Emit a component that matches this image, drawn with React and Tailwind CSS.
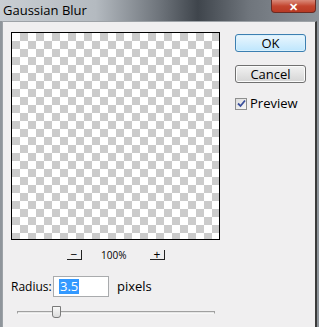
import { useState } from 'react';

function Checker() {
	return (
		<div
			className="w-[209px] h-[208px] border border-black bg-white"
			style={{
				backgroundImage:
					'linear-gradient(45deg, #cbcbcb 25%, transparent 25%, transparent 75%, #cbcbcb 75%), linear-gradient(45deg, #cbcbcb 25%, transparent 25%, transparent 75%, #cbcbcb 75%)',
				backgroundSize: '16px 16px',
				backgroundPosition: '0 0, 8px 8px',
			}}
		/>
	);
}

function WinButton({ label, focused }) {
	return (
		<button
			className={`w-[71px] h-[18px] rounded-[3px] border text-[13px] leading-none text-black bg-gradient-to-b ${
				focused
					? 'border-[#3c7fb1] from-[#eaf6fd] to-[#bee6fd] shadow-[inset_0_0_0_1px_#d9f0fc]'
					: 'border-[#707070] from-[#f2f2f2] to-[#d5d5d5] shadow-[inset_0_0_0_1px_#fbfbfb]'
			}`}
		>
			{label}
		</button>
	);
}

function ZoomBtn({ label }) {
	return (
		<div className="w-[15px] h-[10px] flex items-center justify-center border-r border-b border-[#222] text-[12px] leading-none text-black">
			{label}
		</div>
	);
}

export default function App() {
	const [preview, setPreview] = useState(true);

	return (
		<div
			className="w-[319px] h-[327px] flex flex-col overflow-hidden"
			style={{ fontFamily: '"Open Sans", "Noto Sans", sans-serif' }}
		>
			{/* title bar */}
			<div className="h-[21px] flex items-start justify-between bg-[linear-gradient(90deg,#c9ced3_0%,#b4bac0_30%,#6e747b_50%,#3f454c_62%,#6f757c_78%,#8d939a_100%)]">
				<span className="pl-[3px] pt-[1px] text-[13px] leading-[18px] text-black">Gaussian Blur</span>
				<div className="mr-[3px] w-[45px] h-[13px] rounded-b-[4px] border border-t-0 border-[#6b2a22] bg-gradient-to-b from-[#d98a7a] via-[#c3452f] to-[#b83a24] flex items-center justify-center">
					<span className="text-white text-[11px] font-bold leading-none">✕</span>
				</div>
			</div>

			{/* dialog body */}
			<div className="flex-1 flex bg-[#8f959b]">
				<div className="flex-1 ml-[2px] mr-[2px] bg-[#f0eff0] border-t border-l border-[#9da2a7] border-r-2 border-r-[#3a3a3a] flex flex-col">
					<div className="flex pt-[10px] pl-[8px]">
						<Checker />
						<div className="ml-[15px] pt-[2px] flex flex-col gap-[13px]">
							<WinButton label="OK" focused />
							<WinButton label="Cancel" />
							<label className="flex items-center gap-[3px] text-[13px] leading-none text-black mt-[1px]">
								<span
									onClick={() => setPreview(!preview)}
									className="w-[12px] h-[12px] border border-[#8e8f8f] bg-gradient-to-br from-[#dcdcdc] to-[#f8f8f8] flex items-center justify-center"
								>
									{preview && (
										<svg width="9" height="9" viewBox="0 0 9 9">
											<path d="M1 4.5 L3.5 7 L8 1.5" stroke="#3a4f9c" strokeWidth="1.8" fill="none" />
										</svg>
									)}
								</span>
								Preview
							</label>
						</div>
					</div>

					<div className="flex items-center h-[10px] mt-[10px] pl-[64px]">
						<ZoomBtn label="−" />
						<span className="ml-[19px] w-[30px] text-[10px] leading-none text-black">100%</span>
						<span className="ml-[19px]">
							<ZoomBtn label="+" />
						</span>
					</div>

					<div className="flex items-center mt-[16px] pl-[8px] h-[21px]">
						<span className="text-[12px] text-black w-[42px]">Radius:</span>
						<div className="w-[56px] h-[21px] border border-[#a9abad] bg-white flex items-center pl-[5px]">
							<span className="bg-[#3399ff] text-white text-[13px] leading-[15px] px-[1px]">3.5</span>
						</div>
						<span className="ml-[8px] text-[13px] text-black">pixels</span>
					</div>

					<div className="relative mt-[9px] ml-[14px] w-[198px] h-[12px] flex items-center">
						<div className="w-full h-[3px] border border-[#a0a0a0] border-b-[#f7f7f7] bg-[#e6e6e6]" />
						<div className="absolute left-[35px] top-0 w-[9px] h-[12px] border border-[#7a7a7a] rounded-b-[3px] bg-gradient-to-b from-[#f8f8f8] to-[#dcdcdc]" />
					</div>
				</div>
			</div>
		</div>
	);
}
